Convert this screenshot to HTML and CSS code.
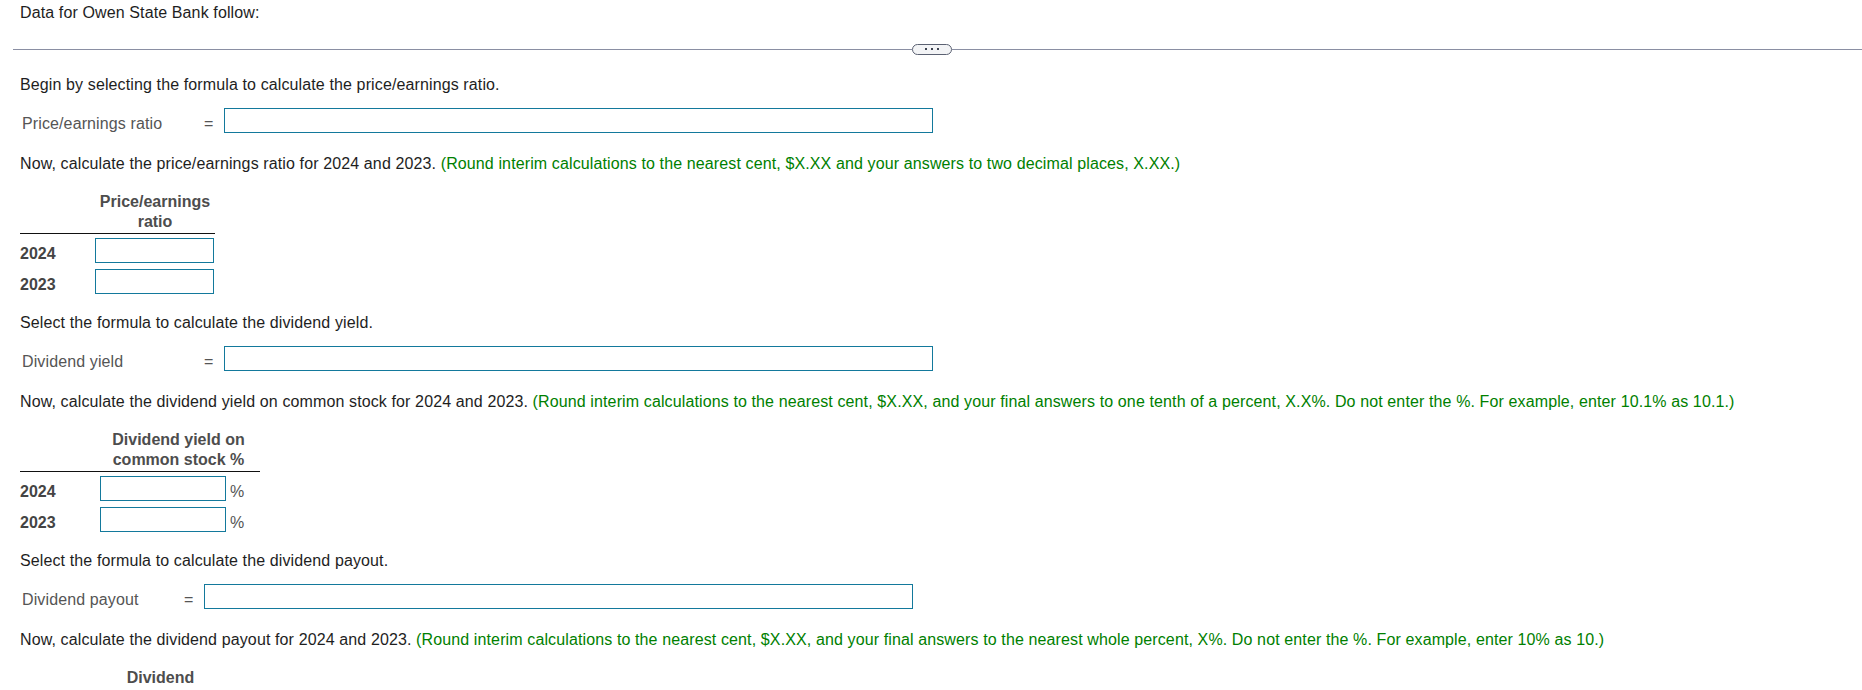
FILE: index.html
```html
<!DOCTYPE html>
<html lang="en">
<head>
    <meta charset="UTF-8">
    <meta name="viewport" content="width=device-width, initial-scale=1.0">
    <title>Owen State Bank - Ratios</title>
    <link rel="stylesheet" href="styles.css">
</head>
<body>
<div class="page">
    <p>Data for Owen State Bank follow:</p>

    <!-- collapsed data panel -->
    <div class="divider">
        <span class="divider-line divider-left"></span>
        <span class="more-pill"><i></i><i></i><i></i></span>
        <span class="divider-line"></span>
    </div>

    <!-- Price/earnings ratio -->
    <section class="step">
        <p>Begin by selecting the formula to calculate the price/earnings ratio.</p>
        <div class="formula-row">
            <label class="formula-label" for="peFormula">Price/earnings ratio</label>
            <span class="eq">=</span>
            <input type="text" id="peFormula" class="formula-input">
        </div>

        <p class="next">Now, calculate the price/earnings ratio for 2024 and 2023. <span class="hint">(Round interim calculations to the nearest cent, $X.XX and your answers to two decimal places, X.XX.)</span></p>
        <table class="answer-table pe-table">
            <thead>
                <tr>
                    <th class="year-col"></th>
                    <th class="input-col">Price/earnings<br>ratio</th>
                </tr>
            </thead>
            <tbody>
                <tr>
                    <td class="year">2024</td>
                    <td><input type="text" class="cell-input"></td>
                </tr>
                <tr>
                    <td class="year">2023</td>
                    <td><input type="text" class="cell-input"></td>
                </tr>
            </tbody>
        </table>
    </section>

    <!-- Dividend yield -->
    <section class="step">
        <p>Select the formula to calculate the dividend yield.</p>
        <div class="formula-row">
            <label class="formula-label" for="dyFormula">Dividend yield</label>
            <span class="eq">=</span>
            <input type="text" id="dyFormula" class="formula-input">
        </div>

        <p class="next">Now, calculate the dividend yield on common stock for 2024 and 2023. <span class="hint">(Round interim calculations to the nearest cent, $X.XX, and your final answers to one tenth of a percent, X.X%. Do not enter the %. For example, enter 10.1% as 10.1.)</span></p>
        <table class="answer-table dy-table">
            <thead>
                <tr>
                    <th class="year-col"></th>
                    <th class="span-title" colspan="2">Dividend yield on<br>common stock %</th>
                </tr>
            </thead>
            <tbody>
                <tr>
                    <td class="year">2024</td>
                    <td class="input-col"><input type="text" class="cell-input"></td>
                    <td class="pct">%</td>
                </tr>
                <tr>
                    <td class="year">2023</td>
                    <td class="input-col"><input type="text" class="cell-input"></td>
                    <td class="pct">%</td>
                </tr>
            </tbody>
        </table>
    </section>

    <!-- Dividend payout -->
    <section class="step">
        <p>Select the formula to calculate the dividend payout.</p>
        <div class="formula-row narrow">
            <label class="formula-label" for="dpFormula">Dividend payout</label>
            <span class="eq">=</span>
            <input type="text" id="dpFormula" class="formula-input">
        </div>

        <p class="next">Now, calculate the dividend payout for 2024 and 2023. <span class="hint">(Round interim calculations to the nearest cent, $X.XX, and your final answers to the nearest whole percent, X%. Do not enter the %. For example, enter 10% as 10.)</span></p>
        <table class="answer-table dp-table">
            <thead>
                <tr>
                    <th class="year-col"></th>
                    <th class="span-title" colspan="2">Dividend<br>payout %</th>
                </tr>
            </thead>
            <tbody>
                <tr>
                    <td class="year">2024</td>
                    <td class="input-col"><input type="text" class="cell-input"></td>
                    <td class="pct">%</td>
                </tr>
                <tr>
                    <td class="year">2023</td>
                    <td class="input-col"><input type="text" class="cell-input"></td>
                    <td class="pct">%</td>
                </tr>
            </tbody>
        </table>
    </section>
</div>
</body>
</html>
```

FILE: styles.css
```css
body {
    margin: 0;
    font-family: "Liberation Sans", Arial, sans-serif;
    font-size: 16px;
    color: #1e1e1e;
    background: #fff;
}
.page {
    padding: 4px 20px 0;
}
p {
    margin: 0;
    letter-spacing: 0.12px;
}
.divider {
    display: flex;
    align-items: center;
    height: 12px;
    margin: 21px -20px 21px -7px;
}
.divider-line {
    flex: 1;
    height: 1px;
    background: #8a8fa3;
}
.divider-left {
    flex: 0 0 899px;
}
.more-pill {
    display: flex;
    align-items: center;
    justify-content: center;
    gap: 4px;
    width: 40px;
    height: 11px;
    box-sizing: border-box;
    border: 1px solid #5b6172;
    border-radius: 6px;
    background: #f3f4f6;
}
.more-pill i {
    width: 2px;
    height: 2px;
    background: #3d4351;
}
.step + .step {
    margin-top: 20px;
}
.formula-row {
    display: flex;
    align-items: flex-end;
    margin-top: 14px;
}
.formula-label {
    width: 184px;
    padding-left: 2px;
    box-sizing: border-box;
    color: #555;
    letter-spacing: 0.12px;
}
.eq {
    width: 20px;
    color: #555;
}
.narrow .formula-label {
    width: 164px;
}
.formula-input,
.cell-input {
    display: block;
    height: 25px;
    margin: 0;
    padding: 2px 4px;
    box-sizing: border-box;
    border: 1px solid #13799c;
    border-radius: 0;
    font: inherit;
    background: #fff;
}
.formula-input {
    width: 709px;
}
.next {
    margin-top: 22px;
}
.hint {
    color: #008000;
}
.answer-table {
    margin-top: 19px;
    border-collapse: collapse;
    border-spacing: 0;
}
.answer-table th {
    padding: 0 0 1px;
    border-bottom: 1px solid #111;
    font-weight: bold;
    line-height: 20px;
    color: #4d4d4d;
    text-align: center;
}
.answer-table td {
    padding: 0;
    vertical-align: bottom;
}
.answer-table tbody tr:first-child td {
    padding-top: 4px;
}
.answer-table tbody tr + tr td {
    padding-top: 6px;
}
.year {
    font-weight: bold;
    color: #444;
    text-align: left;
}
.answer-table td.pct {
    padding-left: 4px;
    width: 30px;
    color: #555;
}
.answer-table th.span-title {
    padding-right: 3px;
}
.pe-table .year-col { width: 75px; }
.pe-table .input-col { width: 120px; }
.pe-table .cell-input { width: 119px; }
.dy-table .year-col { width: 80px; }
.dy-table .input-col { width: 126px; }
.dy-table .cell-input { width: 126px; }
.dp-table .year-col { width: 62px; }
.dp-table .input-col { width: 126px; }
.dp-table .cell-input { width: 126px; }
```
